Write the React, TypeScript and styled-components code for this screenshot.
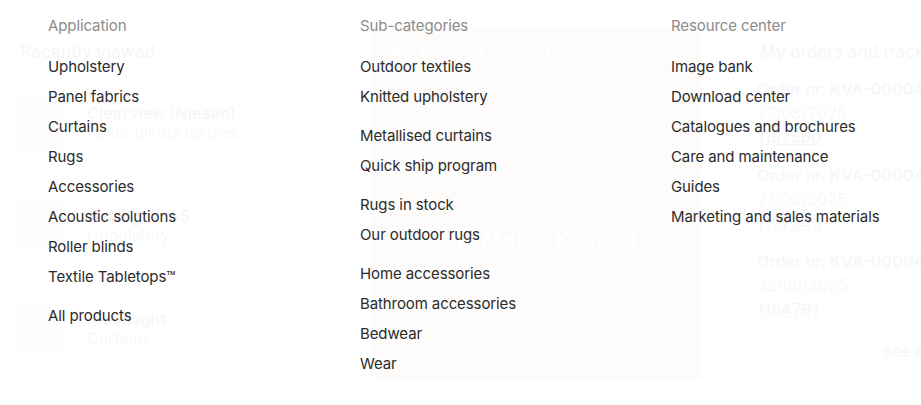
import React from 'react'
import styled, {createGlobalStyle} from 'styled-components'

const GlobalStyle = createGlobalStyle`
  html, body {
    margin: 0;
    padding: 0;
    background: #fff;
  }
  body {
    width: 921px;
    height: 405px;
    overflow: hidden;
    font-family: Inter, "Liberation Sans", Arial, sans-serif;
    color: #1f1f1f;
  }
  ul { list-style: none; margin: 0; padding: 0; }
`

const Stage = styled.div`
  position: relative;
  width: 921px;
  height: 405px;
  overflow: hidden;
`

// account page sitting under the menu
const Page = styled.div`
  display: flex;
  align-items: flex-start;
  padding: 27px 0 0 16px;
  height: 100%;
  box-sizing: border-box;
`

const Recent = styled.section`
  width: 355px;
  flex-shrink: 0;
  padding-top: 13px;

  > h3 {
    margin: 0 0 34px 4px;
    font-size: 17px;
    line-height: 24px;
    font-weight: 600;
  }
`

const RecentRow = styled.div`
  display: flex;
  align-items: center;
  gap: 21px;
  height: 50px;
  margin-bottom: 53px;

  > .thumb {
    width: 50px;
    height: 50px;
    background-color: #cfc7bf;
  }

  > div > b {
    display: block;
    font-size: 16px;
    line-height: 19px;
    font-weight: 700;
  }
  > div > span {
    display: block;
    font-size: 16px;
    line-height: 19px;
  }
`

const ContactCard = styled.section`
  width: 331px;
  height: 352px;
  flex-shrink: 0;
  box-sizing: border-box;
  background-color: #b5a796;
  color: #fff;
  padding: 13px 20px 0;
  display: flex;
  flex-direction: column;
  align-items: center;

  > h3 {
    align-self: flex-start;
    margin: 0 0 37px;
    font-size: 17px;
    line-height: 24px;
    font-weight: 600;
  }
  > .name {
    margin-top: 24px;
    font-size: 22px;
    line-height: 28px;
    font-weight: 700;
  }
  > .line {
    margin-top: 7px;
    font-size: 15px;
    line-height: 26px;
  }
`

const Avatar = styled.div`
  width: 98px;
  height: 98px;
  border-radius: 50%;
  border: 1px solid #fff;
  overflow: hidden;
  display: flex;
  align-items: flex-end;
  justify-content: center;
`

const Orders = styled.section`
  padding: 13px 0 0 55px;
  white-space: nowrap;

  > h3 {
    margin: 0 0 14px 3px;
    font-size: 17px;
    line-height: 24px;
    font-weight: 600;
  }
  > .all {
    margin: 22px 0 0 126px;
    font-size: 15px;
    font-weight: 700;
  }
`

const Order = styled.div`
  margin-bottom: 16px;
  font-size: 16px;
  line-height: 22px;

  > b { display: block; font-weight: 700; }
  > span { display: block; line-height: 26px; }
  > a { color: inherit; font-weight: 700; text-decoration: underline; }
`

// mega menu laid over the page
const Menu = styled.nav`
  position: absolute;
  inset: 0;
  background-color: rgba(255, 255, 255, 0.965);
  display: grid;
  grid-template-columns: 312px 311px 1fr;
  padding: 11px 0 0 48px;
  font-size: 15px;
  line-height: 30px;
  letter-spacing: -0.1px;
`

const Column = styled.div`
  > h4 {
    margin: 0 0 11px;
    font-size: 15px;
    font-weight: 400;
    color: #8c8c8c;
  }
`

const Group = styled.ul`
  & + & { margin-top: 9px; }

  > li { color: #2b2b2b; white-space: nowrap; }
`

const menu = [
  {
    title: 'Application',
    groups: [
      ['Upholstery', 'Panel fabrics', 'Curtains', 'Rugs', 'Accessories', 'Acoustic solutions', 'Roller blinds', 'Textile Tabletops™'],
      ['All products'],
    ],
  },
  {
    title: 'Sub-categories',
    groups: [
      ['Outdoor textiles', 'Knitted upholstery'],
      ['Metallised curtains', 'Quick ship program'],
      ['Rugs in stock', 'Our outdoor rugs'],
      ['Home accessories', 'Bathroom accessories', 'Bedwear', 'Wear'],
    ],
  },
  {
    title: 'Resource center',
    groups: [
      ['Image bank', 'Download center', 'Catalogues and brochures', 'Care and maintenance', 'Guides', 'Marketing and sales materials'],
    ],
  },
]

const recent = [
  {name: 'Clearview (Niesen)', kind: 'Roller blinds textiles'},
  {name: 'Hallingdal 65', kind: 'Upholstery'},
  {name: 'Moonlight', kind: 'Curtains'},
]

const orders = [
  {nr: 'KVA-000043055', date: '27/08/2025', ref: '1157560'},
  {nr: 'KVA-000043054', date: '27/08/2025', ref: '1157545'},
  {nr: 'KVA-000042932', date: '22/08/2025', ref: '1154791'},
]

export default function App() {
  return (
    <Stage>
      <GlobalStyle/>
      <Page>
        <Recent>
          <h3>Recently viewed</h3>
          {recent.map(r => (
            <RecentRow key={r.name}>
              <div className="thumb"/>
              <div>
                <b>{r.name}</b>
                <span>{r.kind}</span>
              </div>
            </RecentRow>
          ))}
        </Recent>
        <ContactCard>
          <h3>My Kvadrat contact</h3>
          <Avatar>
            <svg width="70" height="80" viewBox="0 0 70 80" fill="none" stroke="#fff" strokeWidth="1">
              <circle cx="35" cy="28" r="17"/>
              <path d="M2 80 C6 58 20 50 35 50 C50 50 64 58 68 80"/>
            </svg>
          </Avatar>
          <div className="name">Mie Møller Kempel</div>
          <div className="line">mike@kvadrat.dk</div>
          <div className="line">+45 4414 1906</div>
        </ContactCard>
        <Orders>
          <h3>My orders and tracking</h3>
          {orders.map(o => (
            <Order key={o.nr}>
              <b>Order nr. {o.nr}</b>
              <span>{o.date}</span>
              <a href="#">{o.ref}</a>
            </Order>
          ))}
          <div className="all">See all orders</div>
        </Orders>
      </Page>

      <Menu>
        {menu.map(col => (
          <Column key={col.title}>
            <h4>{col.title}</h4>
            {col.groups.map((g, i) => (
              <Group key={i}>
                {g.map(item => <li key={item}>{item}</li>)}
              </Group>
            ))}
          </Column>
        ))}
      </Menu>
    </Stage>
  )
}
